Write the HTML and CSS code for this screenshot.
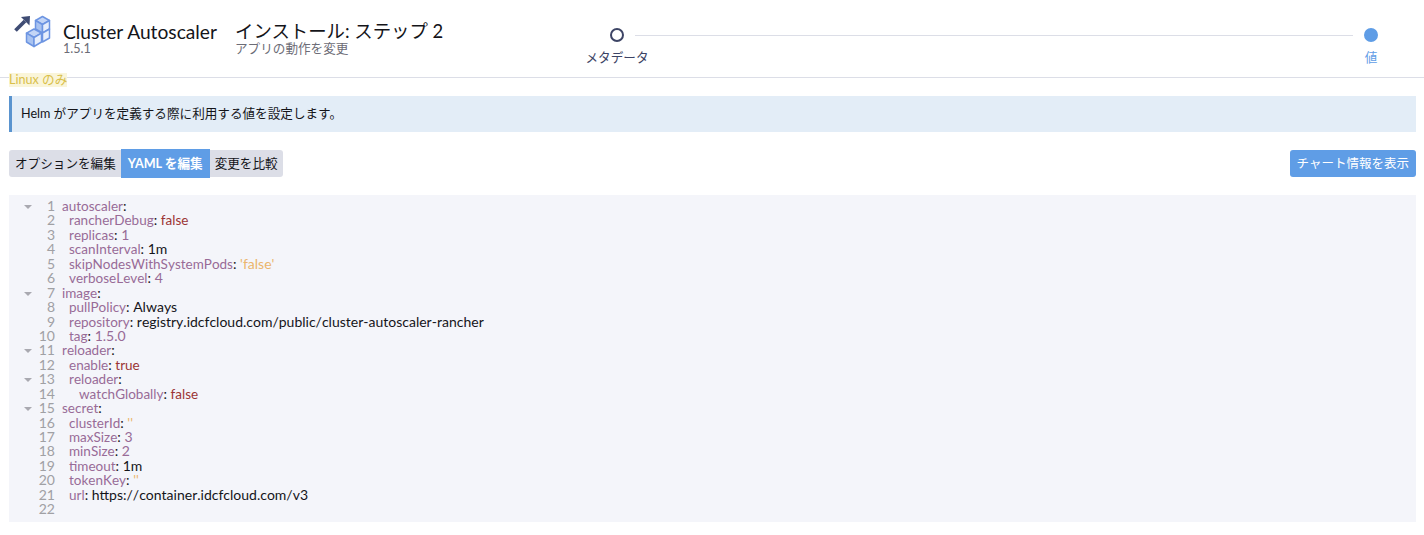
FILE: index.html
```html
<!DOCTYPE html>
<html lang="ja">
<head>
<meta charset="utf-8">
<title>Cluster Autoscaler</title>
<link rel="stylesheet" href="styles.css">
</head>
<body>
<header class="header">
  <svg class="logo" viewBox="12 14 40 36" width="40" height="36" aria-hidden="true">
    <path class="arrow" d="M15.5 30.5 L25 21"/>
    <path class="arrow-head" d="M21 17 L30 16 L29.5 25.5 Z"/>
    <g class="cube">
      <path class="top" d="M42.5 16.5 L49.5 20.5 L42.5 24.5 L35.5 20.5 Z"/>
      <path class="side" d="M35.5 20.5 L35.5 29 L42.5 33 L42.5 24.5 Z"/>
      <path d="M49.5 20.5 L49.5 29 L42.5 33 L42.5 24.5 Z"/>
      <path d="M49.5 29 L49.5 38 L42.5 42 L42.5 33 Z"/>
      <path class="top" d="M34 29 L41.5 33.2 L34 37.5 L26.5 33.2 Z"/>
      <path class="side" d="M26.5 33.2 L26.5 42 L34 46.5 L34 37.5 Z"/>
      <path d="M41.5 33.2 L41.5 42 L34 46.5 L34 37.5 Z"/>
    </g>
  </svg>
  <div class="app">
    <h1 class="app-name">Cluster Autoscaler</h1>
    <div class="sub">1.5.1</div>
  </div>
  <div class="step-title">
    <h2 class="step-name">インストール: ステップ 2</h2>
    <div class="sub">アプリの動作を変更</div>
  </div>
  <div class="stepper">
    <div class="step">
      <span class="dot"></span>
      <span class="step-label">メタデータ</span>
    </div>
    <span class="step-line"></span>
    <div class="step step-active">
      <span class="dot"></span>
      <span class="step-label">値</span>
    </div>
  </div>
</header>
<main class="content">
  <span class="badge">Linux のみ</span>
  <p class="banner">Helm がアプリを定義する際に利用する値を設定します。</p>
  <div class="toolbar">
    <div class="tabs">
      <button class="tab">オプションを編集</button>
      <button class="tab tab-on">YAML を編集</button>
      <button class="tab">変更を比較</button>
    </div>
    <button class="info-btn">チャート情報を表示</button>
  </div>
  <div class="editor">
    <div class="line"><span class="fold"></span><span class="num">1</span><span class="code"><span class="k">autoscaler</span>:</span></div>
    <div class="line"><span class="fold none"></span><span class="num">2</span><span class="code i1"><span class="k">rancherDebug</span>: <span class="b">false</span></span></div>
    <div class="line"><span class="fold none"></span><span class="num">3</span><span class="code i1"><span class="k">replicas</span>: <span class="n">1</span></span></div>
    <div class="line"><span class="fold none"></span><span class="num">4</span><span class="code i1"><span class="k">scanInterval</span>: 1m</span></div>
    <div class="line"><span class="fold none"></span><span class="num">5</span><span class="code i1"><span class="k">skipNodesWithSystemPods</span>: <span class="s">'false'</span></span></div>
    <div class="line"><span class="fold none"></span><span class="num">6</span><span class="code i1"><span class="k">verboseLevel</span>: <span class="n">4</span></span></div>
    <div class="line"><span class="fold"></span><span class="num">7</span><span class="code"><span class="k">image</span>:</span></div>
    <div class="line"><span class="fold none"></span><span class="num">8</span><span class="code i1"><span class="k">pullPolicy</span>: Always</span></div>
    <div class="line"><span class="fold none"></span><span class="num">9</span><span class="code i1"><span class="k">repository</span>: registry.idcfcloud.com/public/cluster-autoscaler-rancher</span></div>
    <div class="line"><span class="fold none"></span><span class="num">10</span><span class="code i1"><span class="k">tag</span>: <span class="n">1.5.0</span></span></div>
    <div class="line"><span class="fold"></span><span class="num">11</span><span class="code"><span class="k">reloader</span>:</span></div>
    <div class="line"><span class="fold none"></span><span class="num">12</span><span class="code i1"><span class="k">enable</span>: <span class="b">true</span></span></div>
    <div class="line"><span class="fold"></span><span class="num">13</span><span class="code i1"><span class="k">reloader</span>:</span></div>
    <div class="line"><span class="fold none"></span><span class="num">14</span><span class="code i2"><span class="k">watchGlobally</span>: <span class="b">false</span></span></div>
    <div class="line"><span class="fold"></span><span class="num">15</span><span class="code"><span class="k">secret</span>:</span></div>
    <div class="line"><span class="fold none"></span><span class="num">16</span><span class="code i1"><span class="k">clusterId</span>: <span class="s">''</span></span></div>
    <div class="line"><span class="fold none"></span><span class="num">17</span><span class="code i1"><span class="k">maxSize</span>: <span class="n">3</span></span></div>
    <div class="line"><span class="fold none"></span><span class="num">18</span><span class="code i1"><span class="k">minSize</span>: <span class="n">2</span></span></div>
    <div class="line"><span class="fold none"></span><span class="num">19</span><span class="code i1"><span class="k">timeout</span>: 1m</span></div>
    <div class="line"><span class="fold none"></span><span class="num">20</span><span class="code i1"><span class="k">tokenKey</span>: <span class="s">''</span></span></div>
    <div class="line"><span class="fold none"></span><span class="num">21</span><span class="code i1"><span class="k">url</span>: https://container.idcfcloud.com/v3</span></div>
    <div class="line"><span class="fold none"></span><span class="num">22</span><span class="code"></span></div>
  </div>
</main>
</body>
</html>
```
FILE: styles.css
```css
* { box-sizing: border-box; }
html, body { margin: 0; padding: 0; background: #fff; }
body {
  font-family: Lato, "Noto Sans CJK JP", sans-serif;
  color: #141419;
  height: 535px;
  overflow: hidden;
}
.header {
  display: flex;
  align-items: flex-start;
  height: 78px;
  padding: 14px 0 0 12px;
  border-bottom: 1px solid #dcdee7;
}
.logo { flex: none; margin-right: 11px; }
.arrow { stroke: #3f4c74; stroke-width: 3.8; fill: none; }
.arrow-head { fill: #3f4c74; }
.cube path { fill: #e6eefc; stroke: #6d95e2; stroke-width: 1.5; stroke-linejoin: round; }
.cube path.top { fill: #c3d5f6; }
.cube path.side { fill: #a9c3f0; }
.app { width: 173px; padding-top: 7px; }
.app-name, .step-name {
  margin: 0;
  font-weight: 400;
  line-height: 21px;
}
.app-name { font-size: 19.2px; }
.step-name { font-size: 18.4px; }
.sub {
  font-size: 12.6px;
  line-height: 13px;
  color: #6c6c76;
}
.step-title { padding-top: 7px; margin-left: -1px; }
.stepper {
  display: flex;
  align-items: flex-start;
  margin-left: auto;
  width: 768px;
  margin-right: 46px;
  padding-top: 14px;
}
.step {
  flex: none;
  width: 14px;
  display: flex;
  flex-direction: column;
  align-items: center;
}
.dot {
  flex: none;
  width: 14px;
  height: 14px;
  border-radius: 50%;
  border: 2px solid #3d4465;
  background: #fff;
}
.step-label {
  white-space: nowrap;
  font-size: 12.6px;
  line-height: 16px;
  margin-top: 8px;
  color: #3d4465;
}
.step-active .dot { background: #5f9de6; border-color: #5f9de6; }
.step-active .step-label { color: #5f9de6; }
.step-line {
  flex: 1;
  height: 1px;
  margin: 7px 11px 0 11px;
  background: #dcdee7;
}
.content { padding: 0 8px 0 9px; }
.badge {
  display: block;
  width: 58px;
  height: 14px;
  margin-top: -5px;
  background: #faf5d9;
  color: #d9bf4a;
  font-size: 12.6px;
  line-height: 14px;
  white-space: nowrap;
  position: relative;
}
.banner {
  margin: 9px 0 0;
  height: 36px;
  padding: 0 0 0 9px;
  background: #e3edf7;
  border-left: 3px solid #5a94cf;
  font-size: 12.6px;
  line-height: 35px;
  color: #141419;
}
.toolbar {
  display: flex;
  justify-content: space-between;
  align-items: center;
  margin-top: 18px;
  height: 27px;
}
.tabs { display: flex; align-items: center; }
.tab, .info-btn {
  border: 0;
  margin: 0;
  font: inherit;
  font-size: 12.6px;
  white-space: nowrap;
  padding-bottom: 3px;
}
.tab {
  height: 27px;
  padding-left: 6px;
  padding-right: 5px;
  background: #dcdee7;
  color: #141419;
}
.tab:first-child { border-radius: 3px 0 0 3px; }
.tab:last-child { border-radius: 0 3px 3px 0; padding-left: 5px; }
.tab-on {
  height: 29px;
  padding-left: 7px;
  padding-right: 7px;
  background: #5f9de6;
  color: #fff;
  font-weight: 700;
}
.info-btn {
  height: 27px;
  padding-left: 7px;
  padding-right: 7px;
  border-radius: 3px;
  background: #5f9de6;
  color: #fff;
  font-size: 12.5px;
}
.editor {
  margin-top: 18px;
  height: 327px;
  padding-top: 4px;
  background: #f4f5fa;
  font-size: 14px;
  font-kerning: none;
}
.line {
  display: flex;
  height: 14.45px;
  line-height: 14.45px;
  white-space: pre;
}
.fold {
  flex: none;
  width: 0;
  height: 0;
  margin: 6px 0 0 15px;
  border-left: 4px solid transparent;
  border-right: 4px solid transparent;
  border-top: 4px solid #a9a9b0;
}
.fold.none { border-top-color: transparent; }
.num {
  flex: none;
  width: 23px;
  text-align: right;
  color: #a0a0a4;
  margin-right: 7px;
}
.i1 { padding-left: 7px; }
.i2 { padding-left: 17px; }
.k { color: #986b97; font-size: 13.5px; }
.b { color: #9b3434; font-size: 13.5px; }
.n { color: #986b97; }
.s { color: #ebb56c; }
```
